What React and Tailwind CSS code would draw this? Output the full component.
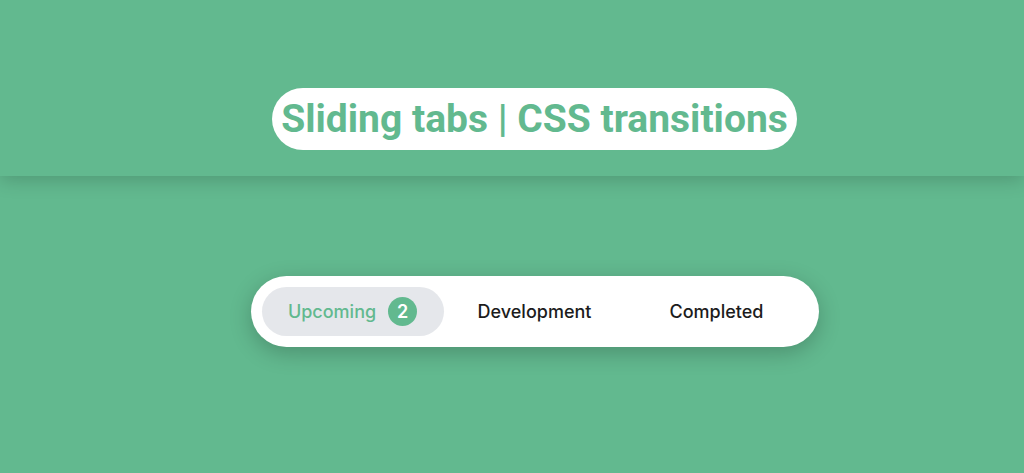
import { useState } from 'react'

// Sliding tabs — header band + pill tab switcher
const tabs = [
  { id: 'upcoming', label: 'Upcoming', count: 2 },
  { id: 'development', label: 'Development' },
  { id: 'completed', label: 'Completed' },
]

export default function App() {
  const [active, setActive] = useState('upcoming')

  return (
    <div className="min-h-screen bg-[#62b98f] font-['Inter',sans-serif]">
      <header className="relative z-10 h-[176px] bg-[#62b98f] shadow-[0_4px_18px_rgba(0,0,0,0.18)] flex justify-center pl-[45px] pt-[88px]">
        <h1 className="h-[62px] px-[9px] bg-white rounded-full flex items-center font-['Roboto',sans-serif] text-[39px] font-bold text-[#62b98f] leading-none">
          Sliding tabs | CSS transitions
        </h1>
      </header>

      <main className="flex justify-center pl-[45px] pt-[100px]">
        <div className="flex p-[11px] bg-white rounded-full shadow-[0_6px_22px_rgba(0,0,0,0.22)]">
          {tabs.map((t) => {
            const on = t.id === active
            return (
              <button
                key={t.id}
                onClick={() => setActive(t.id)}
                className={
                  'w-[182px] h-[49px] rounded-full flex items-center justify-center gap-3 text-[18px] font-medium transition-colors ' +
                  (on ? 'bg-[#e5e7eb] text-[#62b98f]' : 'text-[#1c1c1c]')
                }
              >
                {t.label}
                {t.count && (
                  <span className="w-[29px] h-[29px] rounded-full bg-[#62b98f] text-white text-[18px] font-semibold flex items-center justify-center">
                    {t.count}
                  </span>
                )}
              </button>
            )
          })}
        </div>
      </main>
    </div>
  )
}
